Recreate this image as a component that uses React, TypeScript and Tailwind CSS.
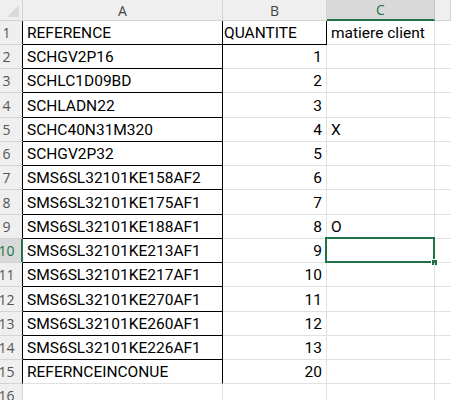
const rows: [string, string, string][] = [
  ['REFERENCE', 'QUANTITE', 'matiere client'],
  ['SCHGV2P16', '1', ''],
  ['SCHLC1D09BD', '2', ''],
  ['SCHLADN22', '3', ''],
  ['SCHC40N31M320', '4', 'X'],
  ['SCHGV2P32', '5', ''],
  ['SMS6SL32101KE158AF2', '6', ''],
  ['SMS6SL32101KE175AF1', '7', ''],
  ['SMS6SL32101KE188AF1', '8', 'O'],
  ['SMS6SL32101KE213AF1', '9', ''],
  ['SMS6SL32101KE217AF1', '10', ''],
  ['SMS6SL32101KE270AF1', '11', ''],
  ['SMS6SL32101KE260AF1', '12', ''],
  ['SMS6SL32101KE226AF1', '13', ''],
  ['REFERNCEINCONUE', '20', ''],
  ['', '', ''],
]

const SELECTED_ROW = 10

const cellFont = 'font-["Roboto",sans-serif] text-[15.5px] text-black'
const headFont = 'font-["Open_Sans",sans-serif] text-[14px]'

export default function App() {
  return (
    <div className="h-[400px] w-[451px] overflow-hidden bg-white">
      <div className="grid grid-cols-[23px_200px_104px_108px_1fr] grid-rows-[21px_24px_24px_24px_25px_24px_24px_24px_25px_24px_24px_24px_25px_24px_24px_24px_24px]">
        {/* corner */}
        <div className="relative border-b border-r border-[#d4d4d4] bg-[#efefef]">
          <div className="absolute bottom-[3px] right-[3px] h-0 w-0 border-b-[12px] border-l-[12px] border-b-[#dadada] border-l-transparent" />
        </div>
        {['A', 'B', 'C', ''].map((col, i) => (
          <div
            key={i}
            className={
              col === 'C'
                ? `flex items-center justify-center border-b-2 border-r border-b-[#217346] border-r-[#c6c6c6] bg-[#d9d9d9] ${headFont} text-[#217346]`
                : `flex items-center justify-center border-b border-r border-b-[#d4d4d4] border-r-[#d4d4d4] bg-[#efefef] ${headFont} text-[#444]`
            }
          >
            {col}
          </div>
        ))}

        {rows.map((r, i) => {
          const n = i + 1
          const sel = n === SELECTED_ROW
          const boxed = n <= 15
          return [
            <div
              key={`h${n}`}
              className={
                sel
                  ? `flex items-center border-b border-r-2 border-b-[#d4d4d4] border-r-[#217346] bg-[#d9d9d9] ${headFont} text-[#217346]`
                  : `flex items-center border-b border-r border-b-[#d4d4d4] bg-[#efefef] ${headFont} text-[#555] ${boxed ? 'border-r-black' : 'border-r-[#d4d4d4]'}`
              }
            >
              <span className="flex w-[13px] justify-center">{n}</span>
            </div>,
            <div
              key={`a${n}`}
              className={
                boxed
                  ? `flex items-center whitespace-nowrap border-r border-r-black pl-[4px] pt-[3px] ${cellFont} ${n < 15 ? 'border-b border-b-black' : 'border-b border-b-[#e1e1e1]'}`
                  : 'border-b border-r border-[#e1e1e1]'
              }
            >
              {r[0]}
            </div>,
            <div
              key={`b${n}`}
              className={
                n === 1
                  ? `flex items-center whitespace-nowrap border-b border-r border-black pl-[1px] pt-[3px] ${cellFont}`
                  : `flex items-center justify-end border-b border-r border-[#e1e1e1] pr-[4px] pt-[3px] ${cellFont}`
              }
            >
              {r[1]}
            </div>,
            <div
              key={`c${n}`}
              className={`relative flex items-center whitespace-nowrap border-b border-r border-[#e1e1e1] pl-[4px] pt-[3px] ${cellFont}`}
            >
              {r[2]}
              {sel && (
                <>
                  <div className="absolute -bottom-[1px] -left-[2px] -right-[1px] -top-[2px] border-2 border-[#217346]" />
                  <div className="absolute -bottom-[4px] -right-[4px] h-[7px] w-[7px] border border-white bg-[#217346]" />
                </>
              )}
            </div>,
            <div key={`d${n}`} className="border-b border-[#e1e1e1]" />,
          ]
        })}
      </div>
    </div>
  )
}
